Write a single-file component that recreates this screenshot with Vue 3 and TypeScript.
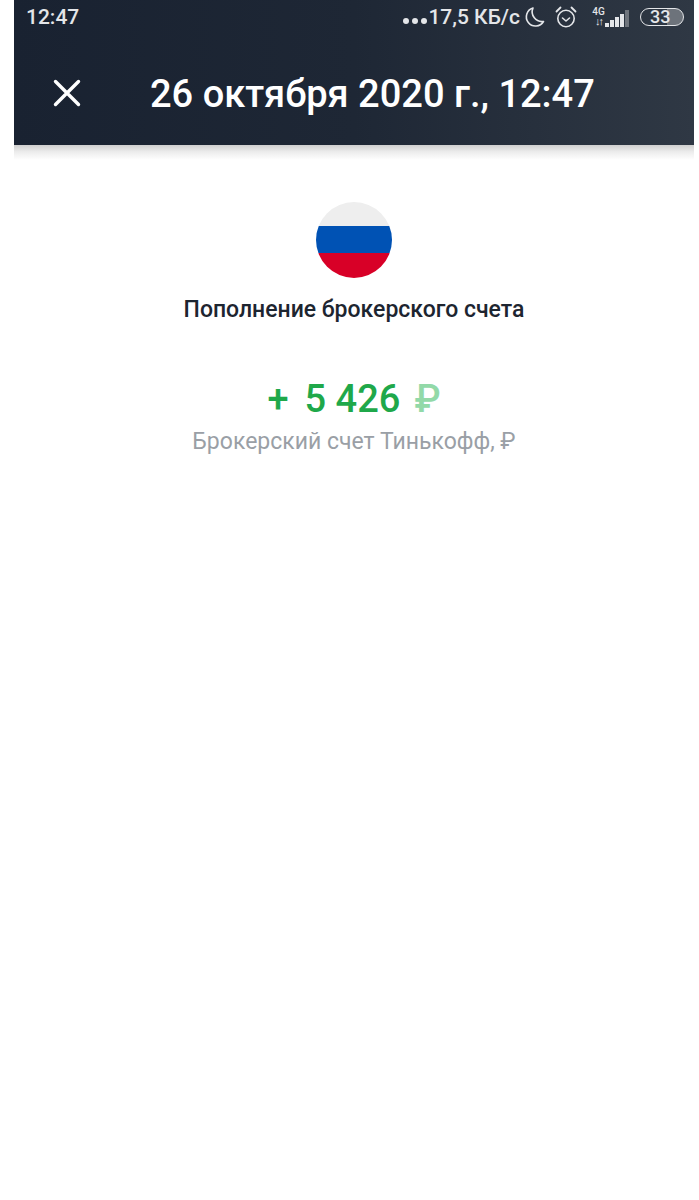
<script setup lang="ts">
const signalBars = [4, 7, 10, 13, 17];
</script>

<template>
	<div class="screen">
		<header class="top">
			<div class="status">
				<span class="clock">12:47</span>
				<div class="status-right">
					<span class="dots"><i></i><i></i><i></i></span>
					<span class="speed">17,5 КБ/с</span>
					<svg class="moon" width="22" height="22" viewBox="0 0 22 22" fill="none">
						<path d="M10 2A9.2 9.2 0 1 0 20.5 15.5A9.8 9.8 0 0 1 10 2Z" stroke="#e4e6e9" stroke-width="1.6" stroke-linejoin="round" />
					</svg>
					<svg class="alarm" width="24" height="24" viewBox="0 0 24 24" fill="none" stroke="#e4e6e9" stroke-linecap="round" stroke-linejoin="round">
						<circle cx="12" cy="13.5" r="8.2" stroke-width="1.6" />
						<path d="M8.5 13l3.5 3l3.5-3" stroke-width="1.6" />
						<path d="M2.5 6.5L6.5 2.5M21.5 6.5L17.5 2.5" stroke-width="1.8" />
					</svg>
					<div class="net">
						<div class="net-left">
							<span class="net-label">4G</span>
							<span class="net-arrows">↓↑</span>
						</div>
						<div class="bars">
							<i v-for="(h, n) in signalBars" :key="h" :class="{ off: n === 4 }" :style="{ height: h + 'px' }"></i>
						</div>
					</div>
					<div class="battery"><span>33</span></div>
				</div>
			</div>
			<div class="toolbar">
				<svg class="close" width="28" height="28" viewBox="0 0 28 28" fill="none">
					<path d="M2.5 2.5L25.5 25.5M25.5 2.5L2.5 25.5" stroke="#fff" stroke-width="3.4" stroke-linecap="round" />
				</svg>
				<h1 class="date">26 октября 2020 г., 12:47</h1>
			</div>
		</header>
		<div class="shade"></div>

		<main class="content">
			<div class="flag"><i class="white"></i><i class="blue"></i><i class="red"></i></div>
			<div class="name">Пополнение брокерского счета</div>
			<div class="amount">
				<span class="plus">+</span>
				<span>5 426</span>
				<span class="cur">₽</span>
			</div>
			<div class="account">Брокерский счет Тинькофф, ₽</div>
		</main>
	</div>
</template>

<style scoped>
.screen {
	box-sizing: border-box;
	width: 699px;
	height: 1200px;
	padding: 0 5px 0 14px;
	background: #fff;
	font-family: Roboto, "Liberation Sans", sans-serif;
	overflow: hidden;
}
.top {
	height: 145px;
	display: flex;
	flex-direction: column;
	background: linear-gradient(90deg, #192231 0%, #1e2735 50%, #2f3844 100%);
}
.shade {
	height: 15px;
	background: linear-gradient(180deg, #cfcfcf 0%, #ececec 45%, #fff 100%);
}
.status {
	height: 33px;
	display: flex;
	align-items: center;
	justify-content: space-between;
	padding: 0 10px 0 12px;
	color: #e4e6e9;
	font-size: 21px;
	font-weight: 500;
}
.status-right {
	display: flex;
	align-items: center;
}
.dots {
	display: flex;
	gap: 3px;
	margin-top: 8px;
	margin-right: 1px;
}
.dots i {
	width: 6px;
	height: 6px;
	border-radius: 50%;
	background: #e4e6e9;
}
.moon {
	margin-left: 3px;
}
.alarm {
	margin-left: 9px;
}
.net {
	display: flex;
	align-items: flex-end;
	width: 37px;
	height: 21px;
	margin-left: 14px;
	justify-content: space-between;
}
.net-left {
	display: flex;
	flex-direction: column;
	align-items: center;
	width: 13px;
	line-height: 10px;
}
.net-label {
	font-size: 10px;
	font-weight: 500;
}
.net-arrows {
	font-size: 11px;
	letter-spacing: -2px;
}
.bars {
	display: flex;
	align-items: flex-end;
	gap: 1.5px;
}
.bars i {
	width: 3.6px;
	background: #e4e6e9;
}
.bars i.off {
	background: #6f757d;
}
.battery {
	box-sizing: border-box;
	width: 44px;
	height: 18px;
	margin-left: 11px;
	border: 1.5px solid #e4e6e9;
	border-radius: 9px;
	display: flex;
	align-items: center;
	padding-left: 9px;
	background: linear-gradient(90deg, transparent 62%, #6d737b 62%);
}
.battery span {
	font-size: 18px;
	line-height: 15px;
	font-weight: 500;
}
.toolbar {
	flex: 1;
	display: flex;
	align-items: center;
	padding: 10px 0 0 39px;
}
.close {
	flex: none;
	margin-bottom: 3px;
}
.date {
	margin: 0 0 0 69px;
	color: #fff;
	font-size: 38px;
	font-weight: 500;
	line-height: 44px;
	white-space: nowrap;
}
.content {
	display: flex;
	flex-direction: column;
	align-items: center;
	padding-top: 42px;
}
.flag {
	width: 76px;
	height: 76px;
	border-radius: 50%;
	overflow: hidden;
	display: flex;
	flex-direction: column;
}
.flag i {
	display: block;
}
.flag .white {
	height: 24px;
	background: #eeeeee;
}
.flag .blue {
	height: 27px;
	background: #0052b4;
}
.flag .red {
	height: 25px;
	background: #d80027;
}
.name {
	margin-top: 20px;
	color: #1d2530;
	font-size: 23px;
	font-weight: 500;
	line-height: 24px;
	white-space: nowrap;
}
.amount {
	margin-top: 56px;
	display: flex;
	gap: 9px;
	color: #1fa84a;
	font-size: 38px;
	font-weight: 500;
	line-height: 42px;
	white-space: nowrap;
}
.plus {
	margin-right: 7px;
}
.cur {
	margin-left: 5px;
	color: #92d9a8;
}
.account {
	margin-top: 9px;
	color: #9a9fa6;
	font-size: 23px;
	line-height: 26px;
	white-space: nowrap;
}
</style>
